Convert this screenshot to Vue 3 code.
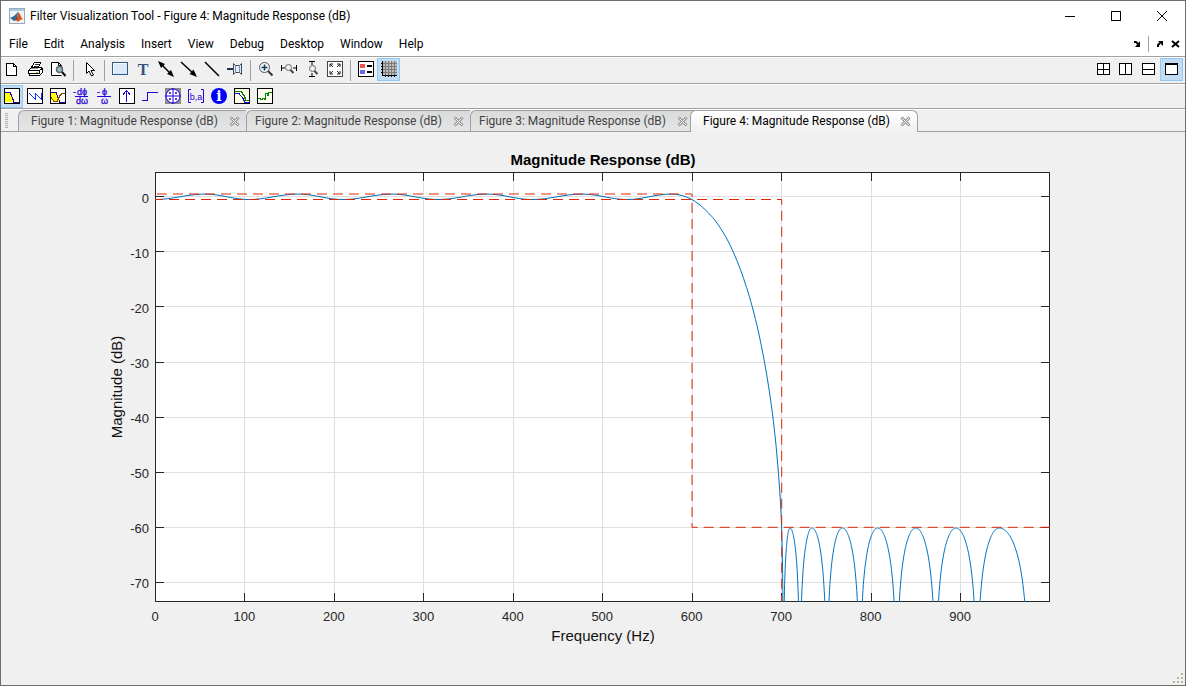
<script setup>
const menus = ['File', 'Edit', 'Analysis', 'Insert', 'View', 'Debug', 'Desktop', 'Window', 'Help']

const icons = {
  file: '<path d="M2.500 2.500h7l3 3v9h-10z" fill="#fff" stroke="#000"/><path d="M9.500 2.500v3h3" fill="none" stroke="#000"/>',
  print: '<path d="M4.500 6.500l3-5h6l-2 5" fill="#fff" stroke="#000"/><path d="M7.500 3.500h4M6.500 5.500h4" stroke="#333"/><path d="M1.500 9.500l3-3h9l2 1v4l-3 3h-10v-2h-1z" fill="#fff" stroke="#000"/><path d="M1.500 9.500h11M12.500 9.500l3-2M12.500 9.500v3M2.500 12.500h10" stroke="#000"/><path d="M9 11h2" stroke="#b8b800"/><path d="M4 7.500h7" stroke="#999"/>',
  preview: '<path d="M11.500 6v-1.500l-3-3h-7v13h10" fill="#fff" stroke="#000"/><path d="M8.500 1.500v3h3" fill="none" stroke="#000"/><circle cx="9.500" cy="8.500" r="3" fill="#8fc0cc" stroke="#666" stroke-width="1.500"/><path d="M12 11l3.500 4" stroke="#111" stroke-width="2"/>',
  pointer: '<path d="M5.500 1.500v11l2.500-2.500 2.500 5 2-1-2.500-4.500h3.500z" fill="#fff" stroke="#000"/>',
  rect: '<rect x="0.500" y="1.500" width="15" height="12" fill="#dceaf7" stroke="#34568b"/><path d="M1.500 12.500v-10h13" stroke="#fff" fill="none"/>',
  text: '<text x="8" y="14" text-anchor="middle" font-family="Liberation Serif, serif" font-size="16" font-weight="bold" fill="#34527c">T</text>',
  doubleArrow: '<path d="M2 2L14 14" stroke="#000" stroke-width="1.500"/><path d="M0 0l7 3-4 4zM16 16l-7-3 4-4z"/>',
  arrow: '<path d="M0 1L13 13" stroke="#000" stroke-width="1.500"/><path d="M16 16l-7.500-3 4-4.500z"/>',
  line: '<path d="M1 1L15 15" stroke="#000" stroke-width="1.500"/>',
  pin: '<path d="M0 8h6" stroke="#234" stroke-width="2"/><path d="M6.500 2.500v11l2-2h4l2 2v-11l-2 2h-4z" fill="#e3edf8" stroke="#3c4b60"/><path d="M8.500 5v6M12.500 5v6" stroke="#7b8ea8"/>',
  zoomIn: '<circle cx="6.500" cy="6.500" r="5" fill="#eef8fa" stroke="#555"/><path d="M3.500 6.500h6M6.500 3.500v6" stroke="#173c52" stroke-width="1.500"/><path d="M10 10l4.500 4.500" stroke="#333" stroke-width="2"/>',
  zoomX: '<path d="M0.500 4v6M15.500 4v6M1 7h3M12 7h3" stroke="#000"/><circle cx="7.500" cy="6.500" r="3" fill="#eaf4f8" stroke="#666"/><path d="M9.500 9l3 3" stroke="#444" stroke-width="2"/>',
  zoomY: '<path d="M5 0.500h6M5 15.500h6M8 1v3M8 12v3" stroke="#000"/><circle cx="8.500" cy="7.500" r="3" fill="#eaf4f8" stroke="#666"/><path d="M10.500 10l3 3" stroke="#444" stroke-width="2"/>',
  fit: '<rect x="0.500" y="0.500" width="15" height="15" fill="#fff" stroke="#444"/><path d="M3 6V3h3M10 3h3v3M13 10v3h-3M6 13H3v-3M3 3l3 3M13 3l-3 3M13 13l-3-3M3 13l3-3" fill="none" stroke="#222"/>',
  legend: '<rect x="0.500" y="0.500" width="15" height="15" fill="#fff" stroke="#000"/><path d="M2 3h5v4H2z" fill="#e55"/><path d="M2 9h5v4H2z" fill="#66e"/><path d="M9 5h5M9 11h5" stroke="#000" stroke-width="2"/>',
  grid: '<path d="M2 0h14v14H2z" fill="#bdbdbd"/><path d="M4.500 0v14M7.500 0v14M10.500 0v14M13.500 0v14M2 2.500h14M2 5.500h14M2 8.500h14M2 11.500h14" stroke="#7c7c7c"/><path d="M1.500 0v14.500H16M0 2.500h2M0 5.500h2M0 8.500h2M0 11.500h2M4.500 14v2M7.500 14v2M10.500 14v2M13.500 14v2" stroke="#000" fill="none"/>',
  magnitude: '<rect x="0.500" y="0.500" width="15" height="15" fill="#fff"/><path d="M1 5h5l4 9H1z" fill="#ff0"/><path d="M1 4.500h5l1 2 2 5 1 3h5" fill="none" stroke="#20a"/><rect x="0.500" y="0.500" width="15" height="15" fill="none" stroke="#000"/>',
  phase: '<rect x="0.500" y="0.500" width="15" height="15" fill="#fff" stroke="#000"/><path d="M2 5l6 6V5l6 6V5" fill="none" stroke="#13e"/>',
  magPhase: '<rect x="0.500" y="0.500" width="15" height="15" fill="#fff"/><path d="M1 5h5l4 9H3l-2-3z" fill="#ff0"/><path d="M1 4.500h5l4 10h5" fill="none" stroke="#20a"/><path d="M1 9.500l3 4h3l3-6 2-2h3" fill="none" stroke="#840"/><rect x="0.500" y="0.500" width="15" height="15" fill="none" stroke="#000"/>',
  groupDelay: '<g fill="#20d" stroke="#20d" stroke-width="0.250" font-family="Liberation Sans, sans-serif" font-size="9"><text x="0" y="7">-</text><text x="4" y="7">dϕ</text><text x="3" y="16">dω</text></g><path d="M2 8.500h13" stroke="#20d"/>',
  phaseDelay: '<g fill="#20d" stroke="#20d" stroke-width="0.250" font-family="Liberation Sans, sans-serif" font-size="9"><text x="1" y="7">-</text><text x="6" y="7">ϕ</text><text x="5" y="16">ω</text></g><path d="M1 8.500h14" stroke="#20d"/>',
  impulse: '<rect x="0.500" y="0.500" width="15" height="15" fill="#fff" stroke="#000"/><path d="M7.500 14V3M4 6.500l3.500-4 3.500 4" fill="none" stroke="#20d"/>',
  step: '<path d="M0 12.500h5.500v-8H16" fill="none" stroke="#20d"/>',
  poleZero: '<rect width="16" height="16" fill="#8a8a8a"/><circle cx="8" cy="8" r="7" fill="#fff" stroke="#20d"/><path d="M8 0v16M0 8h16" stroke="#20d"/><path d="M4 4l2 2M6 4l-2 2M10 4l2 2M12 4l-2 2M4 10l2 2M6 10l-2 2M10 10l2 2M12 10l-2 2" stroke="#54b"/>',
  coeffs: '<path d="M3 1.500H0.500v13H3M13 1.500h2.500v13H13" fill="none" stroke="#20d"/><text x="8" y="12" text-anchor="middle" fill="#20d" font-family="Liberation Sans, sans-serif" font-size="9">b,a</text>',
  info: '<circle cx="8" cy="8" r="8" fill="#00f"/><text x="8" y="13" text-anchor="middle" fill="#fff" font-family="DejaVu Serif, serif" font-size="14" font-weight="bold">i</text>',
  noise: '<rect x="0.500" y="0.500" width="15" height="15" fill="#ffffe8" stroke="#000"/><path d="M1 3.500h6l3 4 2 5h3" fill="none" stroke="#080" stroke-width="1.500"/><path d="M1 5.500h4l4 5 2 4h4" fill="none" stroke="#20d"/>',
  power: '<rect x="0.500" y="0.500" width="15" height="15" fill="#fffff4" stroke="#000"/><path d="M1 10.500h2v1h2v-1h2v1h1.500v-6h2v2h1v-3h3" fill="none" stroke="#080"/>',
  tile4: '<path d="M2.500 2.500h12v11h-12zM8.500 2.500v11M2.500 8.500h12" fill="#fff" stroke="#000"/>',
  tileV: '<path d="M1.500 2.500h12v11h-12zM7.500 2.500v11" fill="#fff" stroke="#000"/>',
  tileH: '<path d="M1.500 2.500h12v11h-12zM1.500 8.500h12" fill="#fff" stroke="#000"/>',
  tile1: '<path d="M1.500 2.500h12v11h-12zM1.500 3.500h12" fill="#fff" stroke="#000"/>',
}
const crisp = new Set(['file', 'rect', 'legend', 'grid', 'impulse', 'step', 'power', 'tile4', 'tileV', 'tileH', 'tile1', 'magnitude', 'phase', 'print', 'noise', 'magPhase'])

const mainTools = [
  [['file', 'New Figure'], ['print', 'Print'], ['preview', 'Print Preview']],
  [['pointer', 'Edit Plot']],
  [['rect', 'Insert Rectangle'], ['text', 'Insert Text'], ['doubleArrow', 'Insert Double Arrow'], ['arrow', 'Insert Arrow'], ['line', 'Insert Line'], ['pin', 'Pin to Axes']],
  [['zoomIn', 'Zoom In'], ['zoomX', 'Zoom X-Axis'], ['zoomY', 'Zoom Y-Axis'], ['fit', 'Restore Default View']],
  [['legend', 'Legend'], ['grid', 'Grid']],
]
const layoutTools = [['tile4', 'Tile Windows'], ['tileV', 'Left/Right Tile'], ['tileH', 'Top/Bottom Tile'], ['tile1', 'Maximize']]
const analysisTools = [
  ['magnitude', 'Magnitude Response'], ['phase', 'Phase Response'], ['magPhase', 'Magnitude and Phase Responses'],
  ['groupDelay', 'Group Delay'], ['phaseDelay', 'Phase Delay'], ['impulse', 'Impulse Response'], ['step', 'Step Response'],
  ['poleZero', 'Pole-Zero Plot'], ['coeffs', 'Filter Coefficients'], ['info', 'Filter Information'],
  ['noise', 'Magnitude Response Estimate'], ['power', 'Round-off Noise Power Spectrum'],
]
const figures = [1, 2, 3, 4]
const active = 4

const xTicks = [155.5, 244.5, 334.5, 423.5, 513.5, 602.5, 692.5, 781.5, 871.5, 960.5].map((x, i) => ({ x, label: i * 100, at: 155 + 89.45 * i }))
const yTicks = [196.5, 251.5, 306.5, 362.5, 417.5, 472.5, 527.5, 582.5].map((y, i) => ({ y, label: i ? -10 * i : 0, at: 202.6 + 55.1 * i }))

const extrema = [155, 205, 249, 298, 343, 392, 438, 487, 532, 582, 627, 671]
const points = []
for (let i = 0; i < extrema.length - 1; i++) {
  const a = extrema[i], b = extrema[i + 1], s = i % 2 ? 1 : -1
  for (let x = a; x < b; x += 2) points.push([x, 196.8 - s * 2.7 * Math.cos((Math.PI * (x - a)) / (b - a))])
}
for (let x = 671; x < 692; x += 3) points.push([x, 194.1 + 5.4 * ((x - 671) / 21) ** 2])

const knots = [[686, 196.3], [692, 199.5], [699, 204.3], [705.7, 210.2], [711.5, 216.2], [717, 223], [725.7, 236.7], [733.3, 252], [740.3, 269.3], [746.5, 287.3], [752.3, 307], [758.7, 333], [764.3, 361], [769, 389], [772.9, 417], [776, 445], [778.4, 472.3], [780.3, 500], [781.7, 530], [782.5, 565], [782.9, 601], [783.2, 640]]
let transition = ''
for (let i = 1; i < knots.length - 2; i++) {
  const [p, a, b, n] = knots.slice(i - 1, i + 3)
  transition += `C${a[0] + (b[0] - p[0]) / 6} ${a[1] + (b[1] - p[1]) / 6} ${b[0] - (n[0] - a[0]) / 6} ${b[1] - (n[1] - a[1]) / 6} ${b[0]} ${b[1]}`
}
const zeros = [783.3, 799.8, 826.8, 859.8, 896.7, 935.7, 977, 1028.8]
const peaks = [790, 812, 842.3, 877.7, 915.7, 956, 999.3]
const lobes = peaks.map((p, i) => {
  const out = []
  for (let k = 3; k <= 77; k++) {
    const u = k / 40
    const x = u <= 1 ? zeros[i] + u * (p - zeros[i]) : p + (u - 1) * (zeros[i + 1] - p)
    out.push(`${x} ${528 - 5.515 * 20 * Math.log10(Math.sin((u * Math.PI) / 2))}`)
  }
  return 'M' + out.join('L')
}).join('')
const curve = 'M' + points.map((p) => p.join(' ')).join('L') + 'L692 199.5' + transition + lobes
</script>

<template>
  <div class="window">
    <header class="title">
      <svg class="logo" viewBox="0 0 16 16" width="16" height="16" aria-hidden="true">
        <rect x="0.500" y="0.500" width="15" height="15" fill="#f0f4f8" stroke="#9aa8b5" />
        <path d="M1 1h14v2H1z" fill="#a9cbe6" />
        <path d="M1 10l4-2 4-4-1 7-3 2z" fill="#2c6f9e" />
        <path d="M9 4c2 1 3 5 5 8-2-1-3 0-5 2-1-1-2-2-4-1 3-2 4-5 4-9z" fill="#d9541e" />
        <path d="M9 4l-1 7-3 2c3-2 4-6 4-9z" fill="#7a1a0c" />
      </svg>
      <h1>Filter Visualization Tool - Figure 4: Magnitude Response (dB)</h1>
      <div class="controls">
        <button aria-label="Minimize"><svg width="12" height="12"><path d="M1 6.500h10" /></svg></button>
        <button aria-label="Maximize"><svg width="12" height="12"><path d="M1.500 1.500h9v9h-9z" /></svg></button>
        <button aria-label="Close"><svg width="12" height="12" class="smooth"><path d="M1 1l10 10M11 1L1 11" /></svg></button>
      </div>
    </header>

    <nav class="menu">
      <button v-for="m in menus" :key="m">{{ m }}</button>
      <div class="dock">
        <button aria-label="Dock"><svg width="10" height="10"><path d="M2 3h2l2 2" fill="none" stroke="#000" stroke-width="2" /><path d="M8 2v6H3z" /></svg></button>
        <i></i>
        <button aria-label="Undock"><svg width="10" height="10"><path d="M3 8V6l2-2" fill="none" stroke="#000" stroke-width="2" /><path d="M3 2h5v5z" /></svg></button>
        <button aria-label="Close figure"><svg width="10" height="10"><path d="M1 2l7 6M8 2L1 8" stroke="#000" stroke-width="2" /></svg></button>
      </div>
    </nav>

    <div class="toolbar">
      <div v-for="(group, g) in mainTools" :key="g" class="group">
        <button v-for="[id, name] in group" :key="id" class="tool" :class="{ on: id === 'grid' }" :aria-label="name">
          <svg viewBox="0 0 16 16" :class="{ crisp: crisp.has(id) }" v-html="icons[id]"></svg>
        </button>
      </div>
      <div class="group end">
        <button v-for="[id, name] in layoutTools" :key="id" class="tool" :class="{ on: id === 'tile1' }" :aria-label="name">
          <svg viewBox="0 0 16 16" class="crisp" v-html="icons[id]"></svg>
        </button>
      </div>
    </div>

    <div class="toolbar second">
      <button v-for="[id, name] in analysisTools" :key="id" class="tool" :class="{ on: id === 'magnitude' }" :aria-label="name">
        <svg viewBox="0 0 16 16" :class="{ crisp: crisp.has(id) }" v-html="icons[id]"></svg>
      </button>
    </div>

    <div class="tabs">
      <span class="grip"></span>
      <div v-for="n in figures" :key="n" class="tab" :class="{ active: n === active }">
        <button class="name">Figure {{ n }}: Magnitude Response (dB)</button>
        <button class="close" :aria-label="'Close figure ' + n">
          <svg width="11" height="11"><path d="M1.500 1.500l8 8M9.500 1.500l-8 8" stroke="#999" stroke-width="3" /><path d="M2 2l7 7M9 2l-7 7" stroke="#eee" /></svg>
        </button>
      </div>
    </div>

    <main>
      <svg class="plot" viewBox="0 132 1186 554" role="img" aria-label="Magnitude Response (dB)">
        <defs><clipPath id="axes"><rect x="155" y="172" width="895" height="430" /></clipPath></defs>
        <rect x="155" y="172" width="895" height="430" fill="#fff" />
        <g stroke="#dfdfdf">
          <path v-for="t in xTicks" :key="'gx' + t.x" :d="`M${t.x} 172V602`" />
          <path v-for="t in yTicks" :key="'gy' + t.y" :d="`M155 ${t.y}H1050`" />
        </g>
        <g stroke="#262626" fill="none">
          <rect x="155.500" y="172.500" width="894" height="429" />
          <path v-for="t in xTicks" :key="'tx' + t.x" :d="`M${t.x} 172v9M${t.x} 602v-9`" />
          <path v-for="t in yTicks" :key="'ty' + t.y" :d="`M155 ${t.y}h9M1050 ${t.y}h-9`" />
        </g>
        <g clip-path="url(#axes)" fill="none">
          <path :d="curve" stroke="#0072bd" />
          <path d="M157 194H692V527.300H1050" stroke="#d92b0c" stroke-dasharray="10 6" />
          <path d="M155 199.500H781.700V602" stroke="#d92b0c" stroke-dasharray="10 6" stroke-dashoffset="2" />
        </g>
        <g class="ticks">
          <text v-for="t in xTicks" :key="'lx' + t.x" :x="t.at" y="621" text-anchor="middle">{{ t.label }}</text>
          <text v-for="t in yTicks" :key="'ly' + t.y" x="149" :y="t.at" text-anchor="end">{{ t.label }}</text>
        </g>
        <text class="heading" x="603" y="165">Magnitude Response (dB)</text>
        <text class="axis" x="603" y="641">Frequency (Hz)</text>
        <text class="axis" transform="translate(122 387) rotate(-90)">Magnitude (dB)</text>
      </svg>
      <svg class="resize" width="12" height="12" aria-hidden="true">
        <path d="M8 0h2v2H8zM4 4h2v2H4zM8 4h2v2H8zM0 8h2v2H0zM4 8h2v2H4zM8 8h2v2H8z" fill="#b8b5a2" />
      </svg>
    </main>
  </div>
</template>

<style>
body { margin: 0; }
</style>

<style scoped>
.window {
  position: relative;
  display: flex;
  flex-direction: column;
  min-height: 100vh;
  box-sizing: border-box;
  background: #f0f0f0;
  color: #000;
  font: 12px/16px Roboto, "Open Sans", sans-serif;
}
.window::after {
  content: "";
  position: absolute;
  inset: 0;
  border: 1px solid #6d6d6d;
  pointer-events: none;
}
button { margin: 0; padding: 0; border: 0; background: none; color: inherit; font: inherit; }
svg { display: block; }
.title { display: flex; align-items: center; height: 31px; padding: 0 1px 0 9px; background: #fff; }
.logo { flex: none; }
h1 { flex: 1; margin: 0 0 0 5px; font: inherit; white-space: nowrap; }
.controls { display: flex; }
.controls button { display: flex; align-items: center; justify-content: center; width: 46px; height: 30px; }
.controls path { fill: none; stroke: #000; }
.controls svg { shape-rendering: crispEdges; }
.controls .smooth { shape-rendering: auto; }
.menu { display: flex; align-items: center; gap: 16px; height: 25px; padding: 0 5px 0 9px; background: #fff; border-bottom: 1px solid #a0a0a0; }
.dock { display: flex; align-items: center; gap: 6px; margin-left: auto; }
.dock i { width: 1px; height: 16px; background: #a0a0a0; }
.toolbar { display: flex; height: 25px; border-top: 1px solid #fff; border-bottom: 1px solid #a0a0a0; }
.second { height: 23px; }
.group { display: flex; }
.group + .group:not(.end)::before { content: ""; width: 1px; height: 21px; margin: 2px 3px 0 4px; background: #a0a0a0; }
.end { margin-left: auto; padding-right: 3px; }
.tool { width: 23px; height: 23px; padding: 3px 3px 4px 4px; }
.tool svg { width: 16px; height: 16px; overflow: visible; }
.tool.on { background: #c2dcf3; box-shadow: inset 0 0 0 1px #90c8f6; }
.crisp { shape-rendering: crispEdges; }
.tabs { display: flex; height: 21px; padding-left: 5px; border-top: 1px solid #fff; border-bottom: 1px solid #a0a0a0; }
.grip { width: 3px; height: 15px; margin: 3px 10px 0 0; background: repeating-linear-gradient(#b0b0b0 0 1px, #f0f0f0 1px 2px); }
.tab {
  display: flex;
  align-items: center;
  box-sizing: border-box;
  width: 224px;
  height: 21px;
  padding: 0 6px 0 8px;
  border: 1px solid #a0a0a0;
  border-width: 1px 0 0 1px;
  border-radius: 6px 0 0 0;
  background: linear-gradient(#dadada, #e6e6e6);
  color: #444;
}
.grip + .tab { width: 228px; padding-left: 12px; }
.tab.active {
  z-index: 1;
  width: 228px;
  height: 22px;
  margin-left: -4px;
  padding: 0 6px 1px 12px;
  border-width: 1px 1px 0;
  border-radius: 6px 6px 0 0;
  background: linear-gradient(#fff, #f0f0f0);
  color: #000;
}
.name { white-space: nowrap; }
.close { margin-left: auto; }
main { position: relative; flex: 1; display: flex; }
.plot { width: 100%; flex: 1; font-family: "Liberation Sans", Arial, sans-serif; }
.ticks { font-size: 13px; fill: #262626; }
.heading { font-size: 15px; font-weight: bold; text-anchor: middle; }
.axis { font-size: 15px; text-anchor: middle; fill: #111; }
.resize { position: absolute; right: 1px; bottom: 1px; }
</style>
